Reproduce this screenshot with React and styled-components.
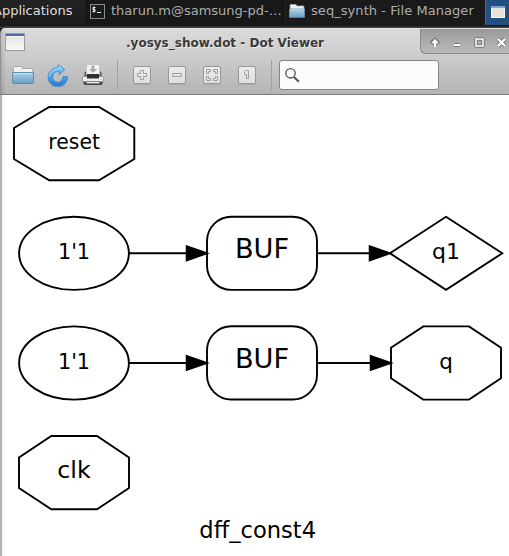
import React from 'react';
import styled, { createGlobalStyle } from 'styled-components';

const GlobalStyle = createGlobalStyle`
  * { box-sizing: border-box; }
  body { margin: 0; overflow: hidden; font-family: 'DejaVu Sans', sans-serif; background: #1b1b1b; }
  svg { display: block; flex: none; }
`;

const Screen = styled.div`
  width: 509px;
  height: 556px;
  display: flex;
  flex-direction: column;
  overflow: hidden;
`;

const Panel = styled.div`
  height: 28px;
  flex: none;
  display: flex;
  background: linear-gradient(#232323, #1b1b1b 24px, #151515 25px, #303030 27px, #555);
`;

const PanelItem = styled.div`
  width: ${(p) => p.$width}px;
  height: 25px;
  flex: none;
  display: flex;
  align-items: flex-start;
  padding: 2px 0 0 ${(p) => p.$pad}px;
  gap: ${(p) => p.$gap || 0}px;
  background: ${(p) => p.$background || 'transparent'};
  border-left: 1px solid ${(p) => p.$edge || 'transparent'};
`;

const IconSlot = styled.span`
  padding-top: ${(p) => p.$top}px;
`;

const PanelLabel = styled.span`
  font-size: 13px;
  line-height: 17px;
  white-space: nowrap;
  color: ${(p) => p.$color || '#adadad'};
  letter-spacing: ${(p) => p.$spacing || 0}px;
  margin-left: ${(p) => p.$shift || 0}px;
`;

const Window = styled.div`
  flex: 1;
  display: flex;
  flex-direction: column;
  background: #151515;
`;

const Chrome = styled.div`
  height: 67px;
  flex: none;
  border-left: 1px solid #909090;
  border-bottom: 1px solid #7b7b7b;
  border-top: 1px solid #e0e0e0;
  border-top-left-radius: 5px;
  background:
    linear-gradient(90deg, rgba(0, 0, 0, 0.12), transparent 5px),
    linear-gradient(#dadada, #d0d0d0 20px, #b4b4b4);
`;

const TitleBar = styled.div`
  height: 27px;
  display: flex;
  align-items: flex-start;
`;

const MenuIcon = styled.div`
  width: 125px;
  padding: 4px 0 0 4px;
`;

const Title = styled.div`
  width: 294px;
  padding-top: 6px;
  font-size: 12px;
  font-weight: bold;
  line-height: 16px;
  white-space: nowrap;
  color: #3b3b3b;
  text-shadow: 1px 1px 0 #e9e9e9;
`;

const Controls = styled.div`
  flex: 1;
  height: 25px;
  border-left: 1px solid #888;
  border-bottom: 1px solid #888;
  border-bottom-left-radius: 6px;
  background: linear-gradient(#999, #aaa 12px, #bababa);
`;

const Toolbar = styled.div`
  height: 38px;
  display: flex;
  align-items: flex-start;
`;

const ToolGroup = styled.div`
  display: flex;
  gap: ${(p) => p.$gap}px;
  padding: ${(p) => p.$padding};
`;

const Separator = styled.div`
  width: 1px;
  height: 30px;
  margin-top: 4px;
  background: #a0a0a0;
`;

const ZoomButton = styled.button`
  width: 18px;
  height: 18px;
  padding: 0;
  display: grid;
  place-items: center;
  border: 1px solid #989898;
  border-radius: 2px;
  background: linear-gradient(#ececec, #dedede);
  box-shadow: 0 1px 0 #aaa;
`;

const Search = styled.div`
  width: 160px;
  height: 30px;
  margin: 4px 0 0 7px;
  padding: 6px 0 0 4px;
  border: 1px solid #858585;
  border-radius: 3px;
  background: #fcfcfc;
`;

const Canvas = styled.div`
  flex: 1;
  display: flex;
  border-left: 2px solid #b5b5b5;
  background: linear-gradient(90deg, #f1f1f1, #fff 3px);
`;

const Folder = ({ width = 22, height = 18, id }) => (
  <svg width={width} height={height} viewBox="0 0 22 18" preserveAspectRatio="none">
    <defs>
      <linearGradient id={id} x1="0" y1="0" x2="0" y2="1">
        <stop offset="0" stopColor="#b0d2e8" />
        <stop offset="1" stopColor="#669dc8" />
      </linearGradient>
    </defs>
    <path d="M1.5 16V1.5Q1.5 .5 2.5 .5H9Q10.5 .5 10.5 2.5H20Q20.5 2.5 20.5 3.5V16Z" fill="#f1f1f1" stroke="#aaa" />
    <path d="M.5 6.5H21.5V16.5Q21.5 17.5 20.5 17.5H1.5Q.5 17.5 .5 16.5Z" fill={`url(#${id})`} stroke="#5c8db3" />
    <path d="M1.5 7.5H20.5" stroke="#c8e3f3" />
  </svg>
);

const Terminal = () => (
  <svg width="15" height="15" viewBox="0 0 15 15">
    <rect x=".5" y=".5" width="14" height="14" fill="#171d1f" stroke="#8b8b86" />
    <path d="M5.5 3.5H3V5.5H5V7.5H2.5M4 2.5V8.5M7 8.5H11" fill="none" stroke="#f4f4f4" />
  </svg>
);

const MiniWindow = ({ width, height }) => (
  <svg width={width} height={height} viewBox={`0 0 ${width} ${height}`}>
    <defs>
      <linearGradient id={`window${width}`} x1="0" y1="0" x2="0" y2="1">
        <stop offset="0" stopColor="#e1e2dd" />
        <stop offset="1" stopColor="#fafaf7" />
      </linearGradient>
    </defs>
    <rect x=".5" y=".5" width={width - 1} height={height - 1} fill={`url(#window${width})`} stroke="#999c96" />
    <path d={`M1 2H${width - 1}`} stroke="#476ca5" strokeWidth="2" />
    <path d={`M1 3.5H${width - 1}`} stroke="#f4f4f4" />
  </svg>
);

const ShowDesktop = () => (
  <svg width="14" height="12" viewBox="0 0 14 12">
    <rect x=".5" y=".5" width="13" height="11" fill="#e4e4dc" stroke="#f7f7f5" />
    <path d="M0 1H14" stroke="#78a4dc" strokeWidth="2" />
  </svg>
);

const WindowControls = () => (
  <svg width="88" height="24" viewBox="0 0 88 24" fill="none">
    <g stroke="#747474" strokeWidth="3.6" strokeLinejoin="round">
      <path d="M14 18V12M11 13.5L14 10.5L17 13.5Z" />
      <path d="M33.5 16H38.5" strokeWidth="4" />
      <rect x="55" y="10" width="7" height="7" strokeWidth="3.5" />
      <path d="M77 10L84 17M84 10L77 17" strokeWidth="4" />
    </g>
    <path d="M14 18V12" stroke="#fff" strokeWidth="2.4" />
    <path d="M10.2 14.2L14 9.8L17.8 14.2Z" fill="#fff" />
    <path d="M33 16H39" stroke="#fff" strokeWidth="2" />
    <rect x="55" y="10" width="7" height="7" stroke="#fff" strokeWidth="1.5" />
    <path d="M77 10L84 17M84 10L77 17" stroke="#fff" strokeWidth="2.4" />
  </svg>
);

const Reload = () => (
  <svg width="22" height="24" viewBox="0 0 22 24">
    <defs>
      <linearGradient id="reload" x1="0" y1="0" x2="0" y2="1">
        <stop offset="0" stopColor="#82d2f5" />
        <stop offset="1" stopColor="#2878d5" />
      </linearGradient>
    </defs>
    <ellipse cx="11" cy="22" rx="8" ry="1.2" fill="#888" opacity=".35" />
    <path
      d="M11 .8L17.8 5.5L12 10.8V7.6C7.8 7.5 5.6 9.7 5.7 13C5.8 16.5 8 18.3 11 18.2C13.8 18.1 15.7 16.3 16 12.5H20.4C20.5 18.5 16.5 22.3 11 22.3C5 22.3 1.1 18.4 1.1 13C1.1 7.8 5.2 3.8 11 3.9Z"
      fill="url(#reload)" stroke="#2d83c8" strokeWidth=".8" strokeLinejoin="round"
    />
    <path d="M2.2 12.5C2.8 7.8 6 5 11.9 5V2.6L16 5.5" fill="none" stroke="#b8e9fb" strokeWidth=".8" />
  </svg>
);

const Printer = () => (
  <svg width="22" height="22" viewBox="0 0 22 22">
    <path d="M2.5 9Q2.5 7.5 4 7.5H18Q19.5 7.5 19.5 9V13H2.5Z" fill="#555" />
    <path d="M4.5 11V.5H17.5V11Z" fill="#f2f2f2" stroke="#c4c4c4" />
    <path d="M9.5 1.5V5H7L11 9L15 5H12.5V1.5Z" fill="#aaa" />
    <path d="M1.5 12.5H20.5L21.5 14V17.5H.5V14Z" fill="#f0f0f0" stroke="#999" />
    <path d="M5 10H17V14.5H5Z" fill="#303030" />
    <path d="M1.5 18H20.5V19.5L19.5 21H2.5L1.5 19.5Z" fill="#444" />
    <path d="M4.5 17.5H17.5V19.5H4.5Z" fill="#e9e9e9" stroke="#888" />
    <path d="M18.5 15.5H20" stroke="#80c957" />
  </svg>
);

const zoomGlyphs = {
  in: 'M6.5 3.5H9.5V6.5H12.5V9.5H9.5V12.5H6.5V9.5H3.5V6.5H6.5Z',
  out: 'M3.5 6.5H12.5V9.5H3.5Z',
  fit: 'M2.5 6.5V2.5H6.5V4.5H4.5V6.5ZM9.5 2.5H13.5V6.5H11.5V4.5H9.5ZM2.5 9.5V13.5H6.5V11.5H4.5V9.5ZM11.5 9.5H13.5V13.5H9.5V11.5H11.5Z',
  actual: 'M6.5 3.5H9.5V11.5H7.5V7.5H5.5V4.5Z',
};

const zoomNames = { in: 'Zoom in', out: 'Zoom out', fit: 'Fit', actual: 'Actual size' };

const Glyph = ({ d }) => (
  <svg width="16" height="16" viewBox="0 0 16 16">
    <path d={d} fill="#e6e6e6" stroke="#a0a0a0" />
  </svg>
);

const SearchIcon = () => (
  <svg width="16" height="16" viewBox="0 0 16 16" fill="none" stroke="#555">
    <circle cx="6.5" cy="6.3" r="4.7" strokeWidth="1.4" />
    <path d="M10 10L14.8 14.8" strokeWidth="2.1" />
  </svg>
);

const NodeText = styled.text`
  font-family: 'DejaVu Sans', sans-serif;
  font-size: ${(p) => p.$size}px;
  fill: #000;
  stroke: none;
  text-anchor: middle;
`;

const Graph = () => (
  <svg width="507" height="461" viewBox="2 95 507 461" fill="none" stroke="#000" strokeWidth="1.9">
    <path d="M49.2 107H99L134.3 128V159L99 180.2H49.2L14 159V128Z" />
    <NodeText x="74.2" y="149" $size={20.4}>reset</NodeText>

    <ellipse cx="74" cy="253.3" rx="54.9" ry="36.6" />
    <NodeText x="74" y="259" $size={20.8}>1'1</NodeText>
    <path d="M129 253.3H187M317 253.3H370" />
    <path d="M186.5 246L207.5 253.3L186.5 260.6ZM369.5 246L390.5 253.3L369.5 260.6Z" fill="#000" strokeWidth="1.5" />
    <rect x="207" y="216.7" width="110" height="73.2" rx="24.4" />
    <NodeText x="262" y="258.3" $size={27.2}>BUF</NodeText>
    <path d="M446 216.8L502.2 253.3L446 289.8L390 253.3Z" />
    <NodeText x="446" y="259" $size={22}>q1</NodeText>

    <ellipse cx="74" cy="363" rx="54.9" ry="36.6" />
    <NodeText x="74" y="369" $size={20.8}>1'1</NodeText>
    <path d="M129 363H187M317 363H371" />
    <path d="M186.5 355.7L207.5 363L186.5 370.3ZM370.5 355.7L391.5 363L370.5 370.3Z" fill="#000" strokeWidth="1.5" />
    <rect x="207" y="326.3" width="110" height="73.2" rx="24.4" />
    <NodeText x="262" y="368" $size={27.2}>BUF</NodeText>
    <path d="M423.3 326.4H469L501 347.8V378.2L469 399.6H423.3L391 378.2V347.8Z" />
    <NodeText x="446" y="368.5" $size={21.5}>q</NodeText>

    <path d="M51.3 436H97L129 457.4V488L97 509.3H51.3L19 488V457.4Z" />
    <NodeText x="74" y="478" $size={23.8}>clk</NodeText>
    <NodeText x="257.7" y="538" $size={22.6}>dff_const4</NodeText>
  </svg>
);

export default function App() {
  return (
    <>
      <GlobalStyle />
      <Screen>
        <Panel>
          <PanelItem $width={86} $pad={0}>
            <PanelLabel $color="#dedede" $shift={-8}>Applications</PanelLabel>
          </PanelItem>
          <PanelItem $width={199} $pad={3} $gap={6} $background="#181818" $edge="#111">
            <IconSlot $top={2}><Terminal /></IconSlot>
            <PanelLabel>tharun.m@samsung-pd-…</PanelLabel>
          </PanelItem>
          <PanelItem $width={200} $pad={3} $gap={6} $background="#1a1a1a" $edge="#232323">
            <IconSlot $top={2}><Folder id="taskFolder" width={16} height={14} /></IconSlot>
            <PanelLabel $spacing={0.06}>seq_synth - File Manager</PanelLabel>
          </PanelItem>
          <PanelItem $width={24} $pad={5} $background="#24507f" $edge="#37699e">
            <IconSlot $top={4}><ShowDesktop /></IconSlot>
          </PanelItem>
        </Panel>
        <Window>
          <Chrome>
            <TitleBar>
              <MenuIcon><MiniWindow width={20} height={18} /></MenuIcon>
              <Title>.yosys_show.dot - Dot Viewer</Title>
              <Controls><WindowControls /></Controls>
            </TitleBar>
            <Toolbar>
              <ToolGroup $gap={13} $padding="8px 13px 0 11px">
                <IconSlot $top={2}><Folder id="openFolder" /></IconSlot>
                <Reload />
                <Printer />
              </ToolGroup>
              <Separator />
              <ToolGroup $gap={17} $padding="10px 15px 0 15px">
                {Object.entries(zoomGlyphs).map(([name, d]) => (
                  <ZoomButton key={name} aria-label={zoomNames[name]}><Glyph d={d} /></ZoomButton>
                ))}
              </ToolGroup>
              <Separator />
              <Search><SearchIcon /></Search>
            </Toolbar>
          </Chrome>
          <Canvas><Graph /></Canvas>
        </Window>
      </Screen>
    </>
  );
}
